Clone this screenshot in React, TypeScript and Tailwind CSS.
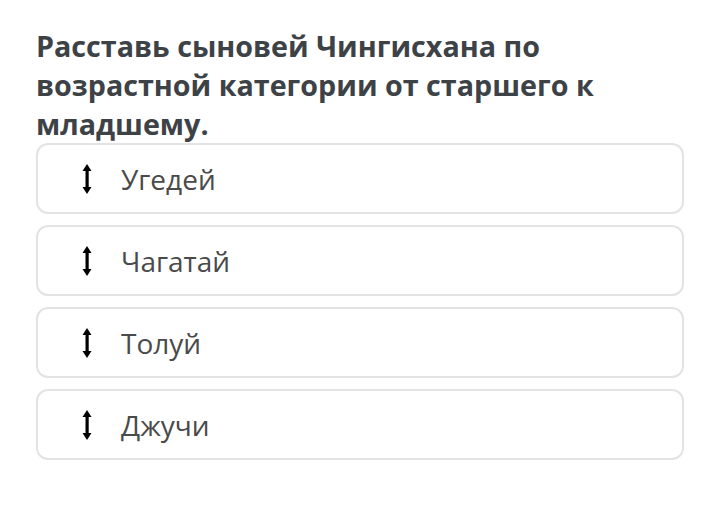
const items = ['Угедей', 'Чагатай', 'Толуй', 'Джучи'];

function UpDownIcon() {
  return (
    <svg width="10" height="30" viewBox="0 0 10 30" className="shrink-0">
      <path d="M5 0 L9.5 7 H0.5 Z" fill="#000" />
      <rect x="3.5" y="5" width="3.2" height="20" fill="#000" />
      <path d="M5 30 L9.5 23 H0.5 Z" fill="#000" />
    </svg>
  );
}

export default function App() {
  return (
    <div className="w-[720px] h-[509px] bg-white font-['Open_Sans',sans-serif]">
      <div className="px-[36px] pt-[26px]">
        <h1 className="text-[28.7px] leading-[39px] font-bold text-[#3d4246]">
          Расставь сыновей Чингисхана по возрастной категории от старшего к младшему.
        </h1>
        <div className="flex flex-col gap-[11px] w-[648px]">
          {items.map(name => (
            <div
              key={name}
              className="h-[71px] flex items-center gap-[29px] pl-[44px] border-2 border-[#e3e3e3] rounded-[12px] bg-white"
            >
              <UpDownIcon />
              <span className="text-[28px] text-[#4a4a4a]">{name}</span>
            </div>
          ))}
        </div>
      </div>
    </div>
  );
}
